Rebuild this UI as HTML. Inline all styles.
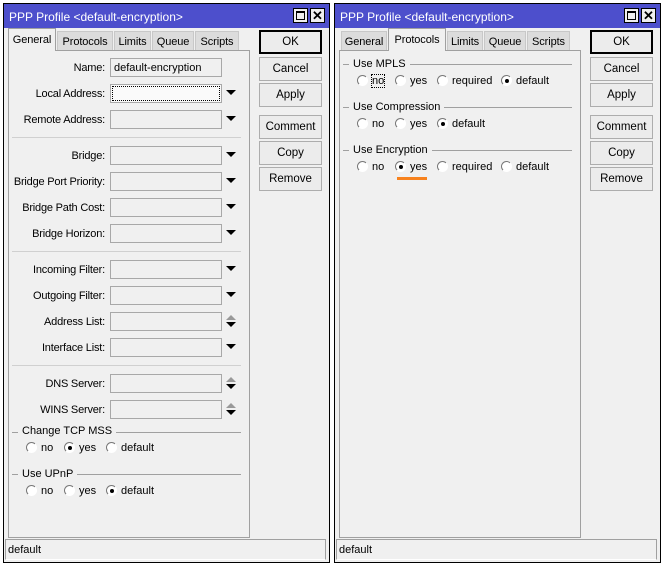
<!DOCTYPE html>
<html><head><meta charset="utf-8"><style>
*{box-sizing:border-box;margin:0;padding:0}
body{width:663px;height:565px;background:#fff;font-family:"Liberation Sans",Arial,sans-serif;font-size:11px;color:#000;position:relative;overflow:hidden}
.w{position:absolute;top:0;left:0;width:331px;height:565px}
.frame{position:absolute;left:3px;top:3px;width:327px;height:560px;background:#f0f0f0;border:1px solid #000}
.title{position:absolute;left:4px;top:4px;width:325px;height:24px;background:#4d4fcc;color:#fff;font-size:12px;line-height:26px;padding-left:5px}
.tb{position:absolute;top:8px;width:15px;height:15px;background:#f0f0f0;border:1px solid #000}
.panel{position:absolute;left:8px;top:50px;width:242px;height:488px;border:1px solid #a0a0a0;background:#f0f0f0}
.tab{position:absolute;top:31px;height:19px;background:#dcdcdc;border:1px solid #c8c8c8;border-bottom:none;text-align:center;line-height:20px;font-size:11px;letter-spacing:-0.1px}
.tab.act{top:28px;height:23px;background:#f0f0f0;border-color:#a0a0a0;line-height:22px;z-index:2}
.btn{position:absolute;left:259px;width:63px;height:24px;border:1px solid #adadad;background:#ececec;text-align:center;line-height:23px;font-size:11.5px}
.btn.def{border:2px solid #000;line-height:21px}
.lbl{position:absolute;right:226px;font-size:11px;letter-spacing:-0.2px;height:19px;line-height:21px;text-align:right;white-space:nowrap}
.fld{position:absolute;left:110px;width:112px;height:19px;border:1px solid #a8a8a8;background:#f0f0f0;font-size:11px;line-height:18px;padding-left:3px}
.dd{position:absolute;left:226px;width:0;height:0;border-left:5px solid transparent;border-right:5px solid transparent;border-top:5px solid #000}
.up{position:absolute;left:226px;width:0;height:0;border-left:5px solid transparent;border-right:5px solid transparent;border-bottom:5px solid #999}
.dn{position:absolute;left:226px;width:0;height:0;border-left:5px solid transparent;border-right:5px solid transparent;border-top:5px solid #000}
.sep{position:absolute;left:12px;width:229px;height:1px;background:#d0d0d0}
.grp{position:absolute;left:12px;width:229px;height:1px;background:#a0a0a0}
.gl{position:absolute;font-size:11px;background:#f0f0f0;padding:0 4px;line-height:15px}
.r{position:absolute;font-size:11px;line-height:15px;white-space:nowrap}
.r i{display:inline-block;width:11px;height:11px;border-radius:50%;border:1px solid #777;border-right-color:#fff;border-bottom-color:#fff;background:#fff;vertical-align:-2px;margin-right:4px;position:relative}
.r i.on:after{content:"";position:absolute;left:3px;top:3px;width:4px;height:4px;border-radius:50%;background:#000}
.status{position:absolute;left:5px;top:539px;width:321px;height:21px;border:1px solid #a0a0a0;border-bottom-color:#fff;font-size:11px;line-height:20px;padding-left:2px}
</style></head><body>

<div class="w">
<div class="frame"></div>
<div class="title">PPP Profile &lt;default-encryption&gt;</div>
<div class="tb" style="left:293px"><div style="position:absolute;left:2px;top:2px;width:9px;height:9px;border:1px solid #000;border-top-width:2px"></div></div>
<div class="tb" style="left:310px;font-weight:bold;font-size:13px;line-height:13px;text-align:center">✕</div>
<div class="panel"></div>
<div class="tab act" style="left:8px;width:48px">General</div>
<div class="tab" style="left:57px;width:56px">Protocols</div>
<div class="tab" style="left:114px;width:37px">Limits</div>
<div class="tab" style="left:152px;width:42px">Queue</div>
<div class="tab" style="left:195px;width:44px">Scripts</div>

<div class="btn def" style="top:30px">OK</div>
<div class="btn" style="top:57px">Cancel</div>
<div class="btn" style="top:83px">Apply</div>
<div class="btn" style="top:115px">Comment</div>
<div class="btn" style="top:141px">Copy</div>
<div class="btn" style="top:167px">Remove</div>

<div class="lbl" style="top:58px">Name:</div><div class="fld" style="top:58px">default-encryption</div>
<div class="lbl" style="top:84px">Local Address:</div><div class="fld" style="top:84px;background:#fafafa"><div style="position:absolute;left:1px;top:1px;right:1px;bottom:1px;border:1px dotted #000"></div></div><div class="dd" style="top:90px"></div>
<div class="lbl" style="top:110px">Remote Address:</div><div class="fld" style="top:110px"></div><div class="dd" style="top:116px"></div>
<div class="sep" style="top:137px"></div>
<div class="lbl" style="top:146px">Bridge:</div><div class="fld" style="top:146px"></div><div class="dd" style="top:152px"></div>
<div class="lbl" style="top:172px">Bridge Port Priority:</div><div class="fld" style="top:172px"></div><div class="dd" style="top:178px"></div>
<div class="lbl" style="top:198px">Bridge Path Cost:</div><div class="fld" style="top:198px"></div><div class="dd" style="top:204px"></div>
<div class="lbl" style="top:224px">Bridge Horizon:</div><div class="fld" style="top:224px"></div><div class="dd" style="top:230px"></div>
<div class="sep" style="top:251px"></div>
<div class="lbl" style="top:260px">Incoming Filter:</div><div class="fld" style="top:260px"></div><div class="dd" style="top:266px"></div>
<div class="lbl" style="top:286px">Outgoing Filter:</div><div class="fld" style="top:286px"></div><div class="dd" style="top:292px"></div>
<div class="lbl" style="top:312px">Address List:</div><div class="fld" style="top:312px"></div><div class="up" style="top:315px"></div><div class="dn" style="top:322px"></div>
<div class="lbl" style="top:338px">Interface List:</div><div class="fld" style="top:338px"></div><div class="dd" style="top:344px"></div>
<div class="sep" style="top:365px"></div>
<div class="lbl" style="top:374px">DNS Server:</div><div class="fld" style="top:374px"></div><div class="up" style="top:377px"></div><div class="dn" style="top:384px"></div>
<div class="lbl" style="top:400px">WINS Server:</div><div class="fld" style="top:400px"></div><div class="up" style="top:403px"></div><div class="dn" style="top:410px"></div>

<div class="grp" style="top:432px"></div><div class="gl" style="left:18px;top:424px">Change TCP MSS</div>
<div class="r" style="left:26px;top:441px"><i></i>no</div>
<div class="r" style="left:64px;top:441px"><i class="on"></i>yes</div>
<div class="r" style="left:106px;top:441px"><i></i>default</div>
<div class="grp" style="top:474px"></div><div class="gl" style="left:18px;top:467px">Use UPnP</div>
<div class="r" style="left:26px;top:484px"><i></i>no</div>
<div class="r" style="left:64px;top:484px"><i></i>yes</div>
<div class="r" style="left:106px;top:484px"><i class="on"></i>default</div>
<div class="status">default</div>
</div>

<div class="w" style="left:331px">
<div class="frame"></div>
<div class="title">PPP Profile &lt;default-encryption&gt;</div>
<div class="tb" style="left:293px"><div style="position:absolute;left:2px;top:2px;width:9px;height:9px;border:1px solid #000;border-top-width:2px"></div></div>
<div class="tb" style="left:310px;font-weight:bold;font-size:13px;line-height:13px;text-align:center">✕</div>
<div class="panel"></div>
<div class="tab" style="left:10px;width:46px">General</div>
<div class="tab act" style="left:57px;width:58px">Protocols</div>
<div class="tab" style="left:116px;width:36px">Limits</div>
<div class="tab" style="left:153px;width:42px">Queue</div>
<div class="tab" style="left:196px;width:43px">Scripts</div>

<div class="btn def" style="top:30px">OK</div>
<div class="btn" style="top:57px">Cancel</div>
<div class="btn" style="top:83px">Apply</div>
<div class="btn" style="top:115px">Comment</div>
<div class="btn" style="top:141px">Copy</div>
<div class="btn" style="top:167px">Remove</div>

<div class="grp" style="top:64px"></div><div class="gl" style="left:18px;top:57px">Use MPLS</div>
<div class="r" style="left:26px;top:74px"><i></i><span style="outline:1px dotted #000">no</span></div>
<div class="r" style="left:64px;top:74px"><i></i>yes</div>
<div class="r" style="left:106px;top:74px"><i></i>required</div>
<div class="r" style="left:170px;top:74px"><i class="on"></i>default</div>
<div class="grp" style="top:107px"></div><div class="gl" style="left:18px;top:100px">Use Compression</div>
<div class="r" style="left:26px;top:117px"><i></i>no</div>
<div class="r" style="left:64px;top:117px"><i></i>yes</div>
<div class="r" style="left:106px;top:117px"><i class="on"></i>default</div>
<div class="grp" style="top:150px"></div><div class="gl" style="left:18px;top:143px">Use Encryption</div>
<div class="r" style="left:26px;top:160px"><i></i>no</div>
<div class="r" style="left:64px;top:160px"><i class="on"></i>yes</div>
<div class="r" style="left:106px;top:160px"><i></i>required</div>
<div class="r" style="left:170px;top:160px"><i></i>default</div>
<div style="position:absolute;left:66px;top:177px;width:30px;height:3px;background:#f7821e"></div>
<div class="status">default</div>
</div>
</body></html>
